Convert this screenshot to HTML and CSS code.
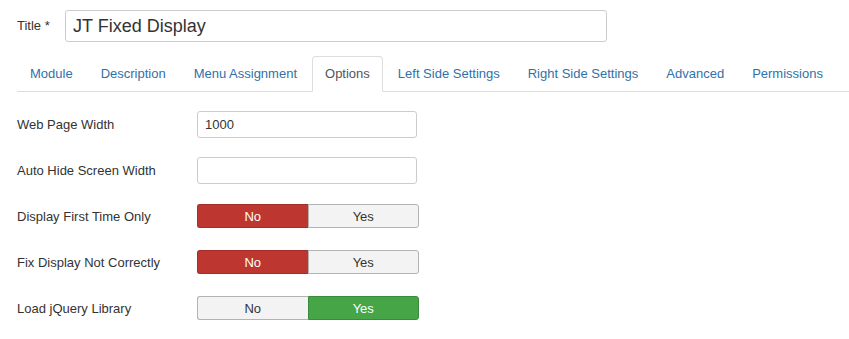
FILE: index.html
```html
<!DOCTYPE html>
<html lang="en">
<head>
  <meta charset="UTF-8">
  <title>Module: JT Fixed Display</title>
  <link rel="stylesheet" href="styles.css">
</head>
<body>
  <div class="title-row">
    <label class="title-label" for="title">Title *</label>
    <input class="title-input" id="title" type="text" value="JT Fixed Display">
  </div>

  <ul class="tabs">
    <li><a href="#">Module</a></li>
    <li><a href="#">Description</a></li>
    <li><a href="#">Menu Assignment</a></li>
    <li class="active"><a href="#">Options</a></li>
    <li><a href="#">Left Side Settings</a></li>
    <li><a href="#">Right Side Settings</a></li>
    <li><a href="#">Advanced</a></li>
    <li><a href="#">Permissions</a></li>
  </ul>

  <div class="form">
    <div class="row">
      <label class="field-label">Web Page Width</label>
      <input class="text-input" type="text" value="1000">
    </div>
    <div class="row">
      <label class="field-label">Auto Hide Screen Width</label>
      <input class="text-input" type="text" value="">
    </div>
    <div class="row">
      <label class="field-label">Display First Time Only</label>
      <div class="toggle">
        <span class="btn no-on">No</span>
        <span class="btn">Yes</span>
      </div>
    </div>
    <div class="row">
      <label class="field-label">Fix Display Not Correctly</label>
      <div class="toggle">
        <span class="btn no-on">No</span>
        <span class="btn">Yes</span>
      </div>
    </div>
    <div class="row">
      <label class="field-label">Load jQuery Library</label>
      <div class="toggle">
        <span class="btn">No</span>
        <span class="btn yes-on">Yes</span>
      </div>
    </div>
  </div>
</body>
</html>
```

FILE: styles.css
```css
body {
  margin: 0;
  font-family: "Liberation Sans", Arial, sans-serif;
  font-size: 13px;
  color: #333;
  background: #fff;
}
.title-row {
  display: flex;
  align-items: flex-start;
  padding: 10px 0 0 17px;
}
.title-label {
  width: 48px;
  margin-top: 8px;
  font-size: 13px;
}
.title-input {
  box-sizing: border-box;
  width: 542px;
  height: 32px;
  border: 1px solid #ccc;
  border-radius: 3px;
  padding: 0 7px;
  font-family: inherit;
  font-size: 18px;
  color: #333;
}
.tabs {
  display: flex;
  list-style: none;
  margin: 14px 0 0 17px;
  padding: 0;
  border-bottom: 1px solid #ddd;
  white-space: nowrap;
}
.tabs li {
  flex-shrink: 0;
  margin-right: 2px;
  margin-bottom: -1px;
}
.tabs a {
  display: block;
  padding: 0 12px;
  line-height: 34px;
  border: 1px solid transparent;
  border-radius: 4px 4px 0 0;
  color: #3071a9;
  text-decoration: none;
}
.tabs .active a {
  border-color: #ddd;
  border-bottom-color: #fff;
  background: #fff;
  color: #555;
}
.form {
  padding: 9px 0 0 17px;
}
.row {
  display: flex;
  align-items: center;
  height: 46px;
}
.field-label {
  width: 180px;
}
.text-input {
  box-sizing: border-box;
  width: 220px;
  height: 27px;
  border: 1px solid #ccc;
  border-radius: 3px;
  padding: 0 7px;
  font-family: inherit;
  font-size: 13px;
  color: #333;
}
.toggle {
  display: flex;
  width: 222px;
  height: 24px;
}
.btn {
  flex: 1;
  display: flex;
  align-items: center;
  justify-content: center;
  background: #f3f3f3;
  border: 1px solid #b3b3b3;
  color: #333;
}
.btn:first-child {
  border-radius: 3px 0 0 3px;
  border-right: none;
}
.btn:last-child {
  border-radius: 0 3px 3px 0;
}
.no-on {
  background: #bd362f;
  border-color: #a32d27;
  color: #fff;
}
.yes-on {
  background: #46a546;
  border-color: #3a8a3a;
  color: #fff;
}
```
